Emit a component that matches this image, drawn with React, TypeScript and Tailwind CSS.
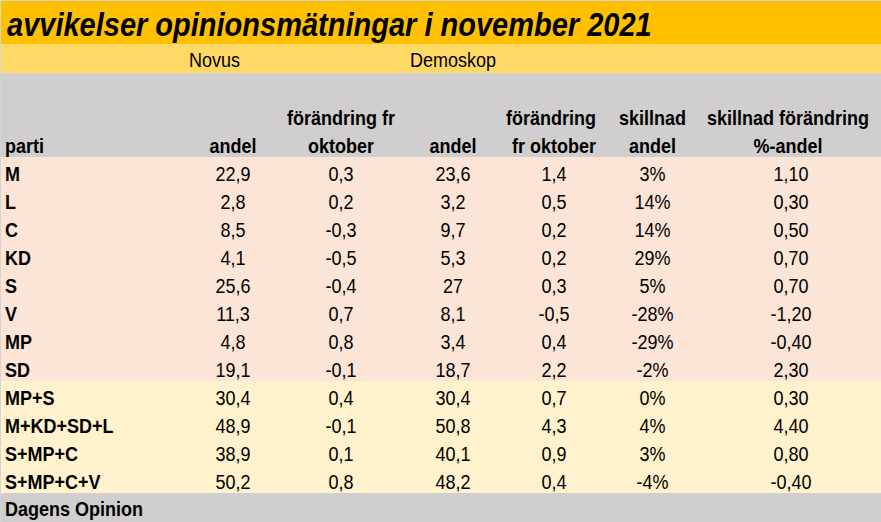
import React from 'react'

interface PartyRow {
  parti: string
  novus: string
  novusDiff: string
  demo: string
  demoDiff: string
  skillnad: string
  skillnadDiff: string
}

const parties: PartyRow[] = [
  { parti: 'M', novus: '22,9', novusDiff: '0,3', demo: '23,6', demoDiff: '1,4', skillnad: '3%', skillnadDiff: '1,10' },
  { parti: 'L', novus: '2,8', novusDiff: '0,2', demo: '3,2', demoDiff: '0,5', skillnad: '14%', skillnadDiff: '0,30' },
  { parti: 'C', novus: '8,5', novusDiff: '-0,3', demo: '9,7', demoDiff: '0,2', skillnad: '14%', skillnadDiff: '0,50' },
  { parti: 'KD', novus: '4,1', novusDiff: '-0,5', demo: '5,3', demoDiff: '0,2', skillnad: '29%', skillnadDiff: '0,70' },
  { parti: 'S', novus: '25,6', novusDiff: '-0,4', demo: '27', demoDiff: '0,3', skillnad: '5%', skillnadDiff: '0,70' },
  { parti: 'V', novus: '11,3', novusDiff: '0,7', demo: '8,1', demoDiff: '-0,5', skillnad: '-28%', skillnadDiff: '-1,20' },
  { parti: 'MP', novus: '4,8', novusDiff: '0,8', demo: '3,4', demoDiff: '0,4', skillnad: '-29%', skillnadDiff: '-0,40' },
  { parti: 'SD', novus: '19,1', novusDiff: '-0,1', demo: '18,7', demoDiff: '2,2', skillnad: '-2%', skillnadDiff: '2,30' },
]

const blocks: PartyRow[] = [
  { parti: 'MP+S', novus: '30,4', novusDiff: '0,4', demo: '30,4', demoDiff: '0,7', skillnad: '0%', skillnadDiff: '0,30' },
  { parti: 'M+KD+SD+L', novus: '48,9', novusDiff: '-0,1', demo: '50,8', demoDiff: '4,3', skillnad: '4%', skillnadDiff: '4,40' },
  { parti: 'S+MP+C', novus: '38,9', novusDiff: '0,1', demo: '40,1', demoDiff: '0,9', skillnad: '3%', skillnadDiff: '0,80' },
  { parti: 'S+MP+C+V', novus: '50,2', novusDiff: '0,8', demo: '48,2', demoDiff: '0,4', skillnad: '-4%', skillnadDiff: '-0,40' },
]

// same column widths for every row of the sheet
const cols = 'grid grid-cols-[185px_94px_122px_102px_100px_97px_1fr]'
// the sheet's glyphs are a bit taller than plain Arial
const tall = 'origin-bottom scale-y-[1.12]'

function HeaderRow({ cells }: { cells: string[] }) {
  return (
    <div className={`${cols} h-[28px] items-end font-bold leading-[20px]`}>
      <div className={`pl-1 ${tall}`}>{cells[0]}</div>
      <div className={`text-center ${tall}`}>{cells[1]}</div>
      <div className={`text-center whitespace-nowrap ${tall}`}>{cells[2]}</div>
      <div className={`text-center ${tall}`}>{cells[3]}</div>
      <div className={`text-right pr-[8px] whitespace-nowrap ${tall}`}>{cells[4]}</div>
      <div className={`text-center ${tall}`}>{cells[5]}</div>
      <div className={`text-center whitespace-nowrap pr-[6px] ${tall}`}>{cells[6]}</div>
    </div>
  )
}

function DataRow({ row, bg }: { row: PartyRow, bg: string }) {
  return (
    <div className={`${cols} h-[28px] items-end leading-[20px] ${bg}`}>
      <div className={`pl-1 font-bold ${tall}`}>{row.parti}</div>
      <div className={`text-center ${tall}`}>{row.novus}</div>
      <div className={`text-center ${tall}`}>{row.novusDiff}</div>
      <div className={`text-center ${tall}`}>{row.demo}</div>
      <div className={`text-center ${tall}`}>{row.demoDiff}</div>
      <div className={`text-center ${tall}`}>{row.skillnad}</div>
      <div className={`text-center ${tall}`}>{row.skillnadDiff}</div>
    </div>
  )
}

export default function App() {
  return (
    <div
      className="w-[881px] h-[522px] overflow-hidden border-t border-l border-[#d4d4d4] bg-white text-black text-[18px]"
      style={{ fontFamily: '"Liberation Sans", Arial, sans-serif' }}
    >
      <div className="h-[43px] bg-[#FFC000] flex items-end pl-[6px] pb-[2px]">
        <span className="inline-block origin-bottom scale-y-[1.15] text-[29px] leading-[30px] font-bold italic whitespace-nowrap">
          avvikelser opinionsmätningar i november 2021
        </span>
      </div>

      <div className={`${cols} h-[29px] items-end pb-[2px] leading-[20px] bg-[#FFD966]`}>
        <div />
        <div className={`pl-[3px] col-span-2 ${tall}`}>Novus</div>
        <div className={`pl-[8px] col-span-4 ${tall}`}>Demoskop</div>
      </div>

      <div className="bg-[#D0CECE]">
        <div className="h-[28px]" />
        <HeaderRow cells={['', '', 'förändring fr', '', 'förändring', 'skillnad', 'skillnad förändring']} />
        <HeaderRow cells={['parti', 'andel', 'oktober', 'andel', 'fr oktober', 'andel', '%-andel']} />
      </div>

      {parties.map((p) => (
        <DataRow key={p.parti} row={p} bg="bg-[#FCE4D6]" />
      ))}
      {blocks.map((p) => (
        <DataRow key={p.parti} row={p} bg="bg-[#FFF2CC]" />
      ))}

      <div className="h-[29px] bg-[#D0CECE] flex items-end pl-1 pb-[2px] leading-[20px] font-bold">
        <span className={`inline-block ${tall}`}>Dagens Opinion</span>
      </div>
    </div>
  )
}
